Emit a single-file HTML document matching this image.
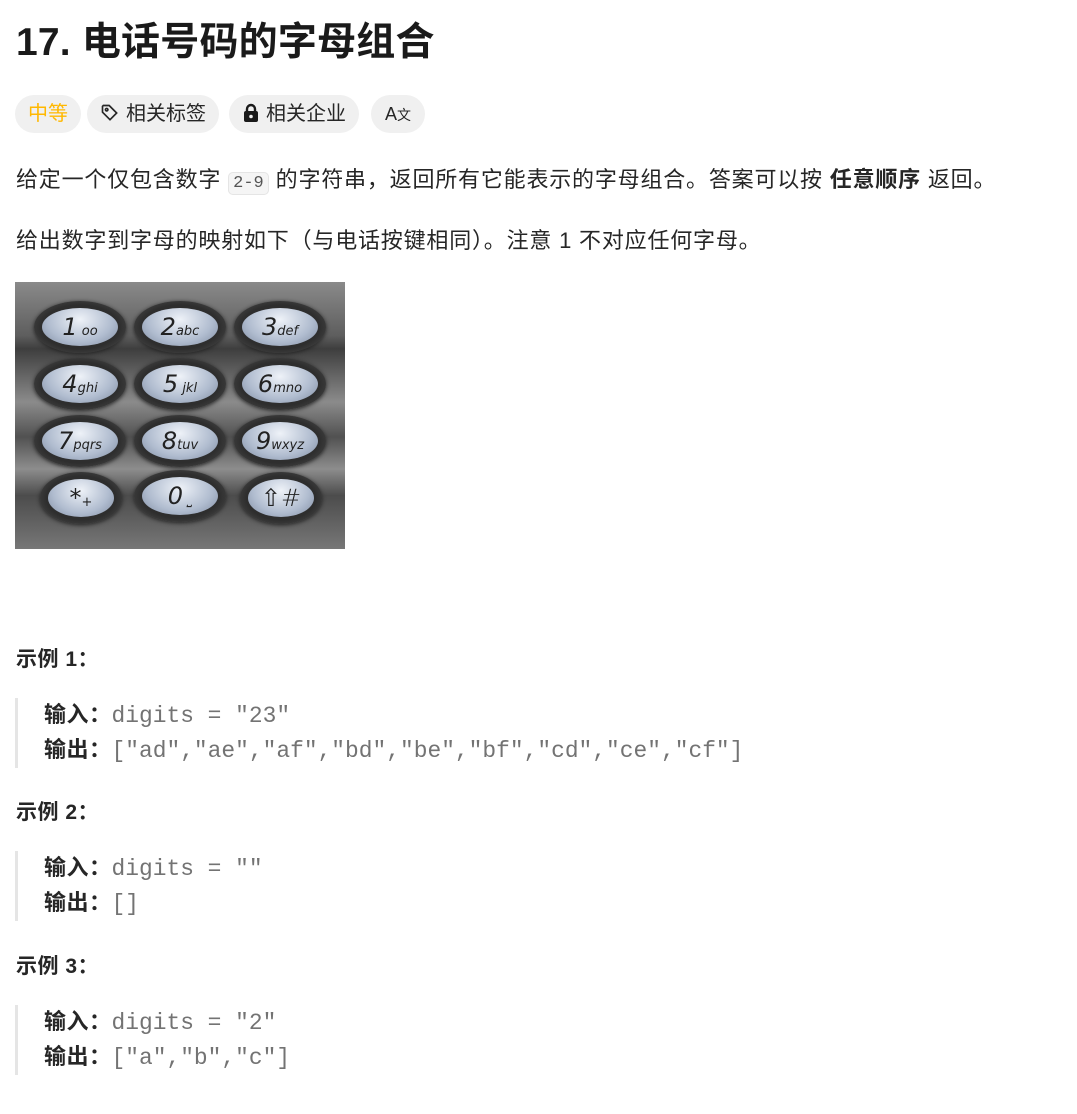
<!DOCTYPE html>
<html><head><meta charset="utf-8"><style>
body{margin:0;background:#fff;font-family:"Liberation Sans","Noto Sans CJK SC",sans-serif;color:#262626;width:1077px;height:1114px;overflow:hidden;position:relative}
h1{position:absolute;left:16px;top:16px;margin:0;font-size:39px;letter-spacing:0.2px;font-weight:bold;color:#1a1a1a;line-height:54px;white-space:nowrap}
.tag{position:absolute;top:95px;height:38px;border-radius:19px;background:#f0f0f0;font-size:20px;line-height:38px;padding:0 13px;color:#262626;white-space:nowrap}
p{position:absolute;left:16px;margin:0;font-size:22px;letter-spacing:0.8px;line-height:30px;white-space:nowrap}
code{font-family:"Liberation Mono",monospace;font-size:17px;letter-spacing:0;background:#f5f5f5;border:1px solid #e5e5e5;border-radius:5px;padding:1px 4px;color:#555}
.kp{position:absolute;left:15px;top:282px;width:330px;height:267px;background:linear-gradient(#8a8a8a 0%,#5e5e5e 20%,#3e3e3e 25%,#8b8b8b 45%,#515151 58%,#8d8d8d 70%,#4c4c4c 80%,#777 100%)}
.k{position:absolute;width:92px;height:52px;border-radius:50%;background:radial-gradient(ellipse,#2e2e2e 60%,#555 100%);box-shadow:0 1px 4px #222}
.k i{position:absolute;left:8px;top:7px;width:76px;height:38px;border-radius:50%;background:radial-gradient(ellipse at 50% 30%,#eef2f8,#b0bccf 60%,#7d8aa0);font-style:italic;font-family:"DejaVu Sans",sans-serif;font-weight:200;font-size:24px;color:#222;text-align:center;line-height:38px}
.k i small{font-size:13px}
h3{position:absolute;left:16px;margin:0;font-size:21px;letter-spacing:0.5px;font-weight:bold;color:#262626;white-space:nowrap}
.q{position:absolute;left:15px;border-left:3px solid #e5e5e5;padding-left:26px;font-size:22px;letter-spacing:0.5px;line-height:33px;white-space:nowrap}
.q b{color:#262626}
.q span{font-family:"Liberation Mono",monospace;font-size:22.9px;letter-spacing:0;color:#737373}
</style></head><body>
<h1>17. 电话号码的字母组合</h1>
<div class="tag" style="left:15px;color:#ffb800">中等</div>
<div class="tag" style="left:87px;padding-left:13px"><svg width="20" height="20" viewBox="0 0 24 24" style="vertical-align:-3px;margin-right:6px" fill="none" stroke="#262626" stroke-width="2"><path d="M3 4v7l9 9 8-8-9-9H4z"/><circle cx="8" cy="8" r="1.5"/></svg>相关标签</div>
<div class="tag" style="left:229px"><svg width="18" height="20" viewBox="0 0 18 20" style="vertical-align:-3px;margin-right:6px"><path d="M5 9V6a4 4 0 0 1 8 0v3" fill="none" stroke="#1a1a1a" stroke-width="2.4"/><rect x="2" y="8" width="14" height="11" rx="2" fill="#1a1a1a"/><circle cx="9" cy="13.5" r="1.8" fill="#f0f0f0"/></svg>相关企业</div>
<div class="tag" style="left:371px;padding:0 14px;font-size:18px">A<span style="font-size:14px">文</span></div>
<p style="top:165px">给定一个仅包含数字 <code>2-9</code> 的字符串，返回所有它能表示的字母组合。答案可以按 <b>任意顺序</b> 返回。</p>
<p style="top:226px">给出数字到字母的映射如下（与电话按键相同）。注意 1 不对应任何字母。</p>
<div class="kp">
<div class="k" style="left:19px;top:19px"><i>1<small> oo</small></i></div>
<div class="k" style="left:119px;top:19px"><i>2<small>abc</small></i></div>
<div class="k" style="left:219px;top:19px"><i>3<small>def</small></i></div>
<div class="k" style="left:19px;top:76px"><i>4<small>ghi</small></i></div>
<div class="k" style="left:119px;top:76px"><i>5<small> jkl</small></i></div>
<div class="k" style="left:219px;top:76px"><i>6<small>mno</small></i></div>
<div class="k" style="left:19px;top:133px"><i>7<small>pqrs</small></i></div>
<div class="k" style="left:119px;top:133px"><i>8<small>tuv</small></i></div>
<div class="k" style="left:219px;top:133px"><i>9<small>wxyz</small></i></div>
<div class="k" style="left:25px;top:190px;width:82px"><i style="width:66px">*<small>+</small></i></div>
<div class="k" style="left:119px;top:188px"><i>0<small> ⎵</small></i></div>
<div class="k" style="left:225px;top:190px;width:82px"><i style="width:66px;font-style:normal">⇧#</i></div>
</div>
<h3 style="top:643px">示例 1：</h3>
<div class="q" style="top:698px"><b>输入：</b><span>digits = "23"</span><br><b>输出：</b><span>["ad","ae","af","bd","be","bf","cd","ce","cf"]</span></div>
<h3 style="top:796px">示例 2：</h3>
<div class="q" style="top:851px"><b>输入：</b><span>digits = ""</span><br><b>输出：</b><span>[]</span></div>
<h3 style="top:950px">示例 3：</h3>
<div class="q" style="top:1005px"><b>输入：</b><span>digits = "2"</span><br><b>输出：</b><span>["a","b","c"]</span></div>
</body></html>
